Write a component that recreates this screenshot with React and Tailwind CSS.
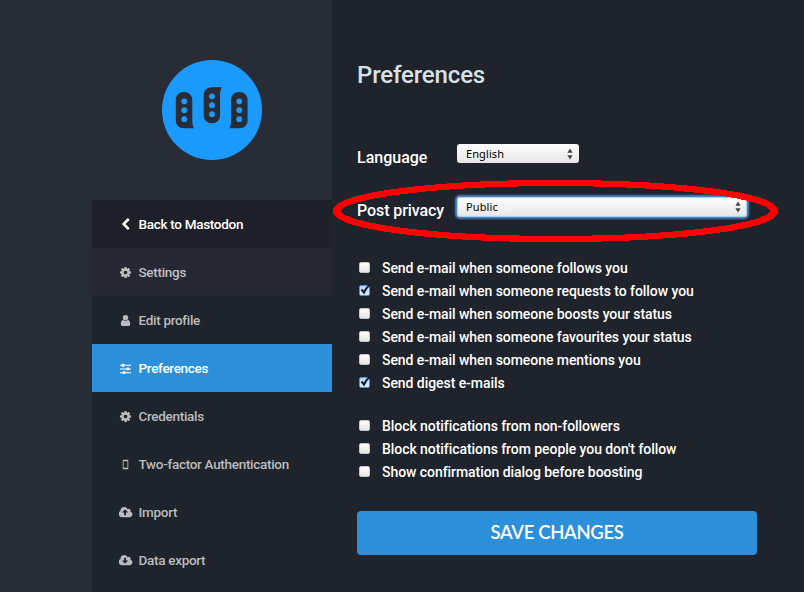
const PATHS = {
  back: "M1427 301l-531 531 531 531q19 19 19 45t-19 45l-166 166q-19 19-45 19t-45-19l-742-742q-19-19-19-45t19-45l742-742q19-19 45-19t45 19l166 166q19 19 19 45t-19 45z",
  cog: "M1152 896q0-106-75-181t-181-75-181 75-75 181 75 181 181 75 181-75 75-181zm512-109v222q0 12-8 23t-20 13l-185 28q-19 54-39 91 35 50 107 138 10 12 10 25t-9 23q-27 37-99 108t-94 71q-12 0-26-9l-138-108q-44 23-91 38-16 136-29 186-7 28-36 28h-222q-14 0-24.5-8.5t-11.5-21.5l-28-184q-49-16-90-37l-141 107q-10 9-25 9-14 0-25-11-126-114-165-168-7-10-7-23 0-12 8-23 15-21 51-66.5t54-70.5q-27-50-41-99l-183-27q-13-2-21-12.5t-8-23.5v-222q0-12 8-23t19-13l186-28q14-46 39-92-40-57-107-138-10-12-10-24 0-10 9-23 26-36 98.5-107.5t94.5-71.5q13 0 26 10l138 107q44-23 91-38 16-136 29-186 7-28 36-28h222q14 0 24.5 8.5t11.5 21.5l28 184q49 16 90 37l142-107q9-9 24-9 13 0 25 10 129 119 165 170 7 8 7 22 0 12-8 23-15 21-51 66.5t-54 70.5q26 50 41 98l183 28q13 2 21 12.5t8 23.5z",
  user: "M1536 1399q0 109-62.5 187t-150.5 78h-854q-88 0-150.5-78t-62.5-187q0-85 8.5-160.5t31.5-152 58.5-131 94-89 134.5-34.5q131 128 313 128t313-128q76 0 134.5 34.5t94 89 58.5 131 31.5 152 8.5 160.5zm-256-887q0 159-112.5 271.5t-271.5 112.5-271.5-112.5-112.5-271.5 112.5-271.5 271.5-112.5 271.5 112.5 112.5 271.5z",
  sliders: "M480 1408v128h-352v-128h352zm352-128q26 0 45 19t19 45v256q0 26-19 45t-45 19h-256q-26 0-45-19t-19-45v-256q0-26 19-45t45-19h256zm160-384v128h-864v-128h864zm-640-512v128h-224v-128h224zm1312 1024v128h-736v-128h736zm-960-1152q26 0 45 19t19 45v256q0 26-19 45t-45 19h-256q-26 0-45-19t-19-45v-256q0-26 19-45t45-19h256zm640 512q26 0 45 19t19 45v256q0 26-19 45t-45 19h-256q-26 0-45-19t-19-45v-256q0-26 19-45t45-19h256zm320 128v128h-224v-128h224zm0-512v128h-864v-128h864z",
  mobile: "M608 256h576q96 0 96 96v1088q0 96-96 96h-576q-96 0-96-96v-1088q0-96 96-96zM624 448v896h544v-896z",
};
const CLOUD =
  "m640 288q0 159-112.5 271.5t-271.5 112.5h-1088q-185 0-316.5-131.5t-131.5-316.5q0-130 70-240t188-165q-2-30-2-43 0-212 150-362t362-150q156 0 285.5 87t188.5 231q71-62 166-62 106 0 181 75t75 181q0 76-41 138 130 31 213.5 135.5t83.5 238.5z";
PATHS.upload =
  "M1216 864q0-14-9-23l-352-352q-9-9-23-9t-23 9l-351 351q-10 12-10 24 0 14 9 23t23 9h224v352q0 13 9.5 22.5t22.5 9.5h192q13 0 22.5-9.5t9.5-22.5v-352h224q13 0 22.5-9.5t9.5-22.5z" + CLOUD;
PATHS.download =
  "M1216 928q0-14-9-23t-23-9h-224v-352q0-13-9.5-22.5t-22.5-9.5h-192q-13 0-22.5 9.5t-9.5 22.5v352h-224q-13 0-22.5 9.5t-9.5 22.5q0 14 9 23l352 352q9 9 23 9t23-9l351-351q10-12 10-24zM1216 864" + CLOUD;

function Icon({ name }) {
  const cloud = name === "upload" || name === "download";
  return (
    <svg
      className={cloud ? "h-[13px] w-[14px] shrink-0" : "h-[13px] w-[13px] shrink-0"}
      viewBox={cloud ? "0 0 1920 1792" : "0 0 1792 1792"}
      fill="currentColor"
      fillRule="evenodd"
    >
      <path d={PATHS[name]} />
    </svg>
  );
}

const NAV = [
  { icon: "back", label: "Back to Mastodon", tone: "rounded-l bg-[#1d2028] text-white" },
  { icon: "cog", label: "Settings", tone: "bg-[#252732] text-[#bcbec1]" },
  { icon: "user", label: "Edit profile", tone: "bg-[#1f232b] text-[#b9bcbf]" },
  { icon: "sliders", label: "Preferences", tone: "bg-[#2b90d9] text-white" },
  { icon: "cog", label: "Credentials", tone: "bg-[#1f232b] text-[#b9bcbf]" },
  { icon: "mobile", label: "Two-factor Authentication", tone: "bg-[#1f232b] text-[#b9bcbf]" },
  { icon: "upload", label: "Import", tone: "bg-[#1f232b] text-[#b9bcbf]" },
  { icon: "download", label: "Data export", tone: "bg-[#1f232b] text-[#b9bcbf]" },
];

function Logo() {
  return (
    <svg className="h-[100px] w-[100px]" viewBox="0 0 100 100">
      <circle cx="50" cy="50" r="50" fill="#1a9bfc" />
      <g fill="#282c37">
        <path d="M22 32c5 0 8.3 3.400 8.300 8v20c0 4 .4 6.500 1.900 8.300H22c-5 0-8.200-3.300-8.200-8V40c0-4.600 3.200-8 8.200-8z" />
        <path d="M50 63.200c-5 0-8.300-3.400-8.300-8V35.500c0-5 3.300-8.300 8.300-8.300h10c-1.500 1.800-1.900 4.300-1.900 8.300v19.700c0 4.600-3.200 8-8.100 8z" />
        <path d="M77.400 32c-5 0-8.300 3.400-8.300 8v20c0 4-.4 6.500-1.900 8.300h10.200c5 0 8.200-3.300 8.200-8V40c0-4.600-3.200-8-8.200-8z" />
      </g>
      <g fill="#1a9bfc">
        {[[22.300, 41.300], [50, 36.300], [77.300, 41.300]].map(([x, y]) =>
          [0, 8.900, 17.900].map((d) => <circle key={`${x}-${d}`} cx={x} cy={y + d} r="2.900" />)
        )}
      </g>
    </svg>
  );
}

function Arrows() {
  return (
    <svg className="h-3 w-[6px]" viewBox="0 0 6 12" fill="#444">
      <path d="M3 0.500L5.600 4.700H0.400zM3 11.500L0.400 7.300h5.200z" />
    </svg>
  );
}

function Check({ checked, children }) {
  return (
    <label className="flex h-[23px] items-center">
      <span
        className={
          checked
            ? "mr-3 mb-[3px] ml-[2px] h-[11px] w-[11px] rounded-[2px] border border-[#5b8cc4] bg-linear-to-b from-[#b7d9f6] to-[#d3efff]"
            : "mr-3 mb-[3px] ml-[2px] h-[11px] w-[11px] rounded-[2px] border border-[#c4c6c9] bg-linear-to-b from-white to-[#e6e6e6]"
        }
      >
        {checked && (
          <svg className="-mt-[2px] h-[11px] w-[11px] overflow-visible" viewBox="0 0 11 11" fill="none" stroke="#071a38" strokeWidth="2">
            <path d="M1.500 5.500L4 8.500Q6 4 10 0.500" />
          </svg>
        )}
      </span>
      <span className="text-[14px] leading-[23px] tracking-[-0.06px] whitespace-nowrap">{children}</span>
    </label>
  );
}

export default function App() {
  return (
    <div className="relative flex h-[592px] w-[804px] overflow-hidden bg-[#1f232b] font-['Roboto',sans-serif] font-medium text-white">
      <aside className="flex w-[332px] shrink-0 flex-col bg-[#282c37] pl-[92px]">
        <div className="flex h-[200px] justify-center pt-[60px]">
          <Logo />
        </div>
        <nav className="flex flex-col">
          {NAV.map((n) => (
            <a key={n.label} className={`flex h-12 items-center pl-[26px] text-[13.5px] tracking-[-0.3px] ${n.tone}`}>
              <span className="mr-[5.5px] flex w-[15px] justify-center">
                <Icon name={n.icon} />
              </span>
              <span className="pt-px whitespace-nowrap">{n.label}</span>
            </a>
          ))}
        </nav>
        <div className="h-2 bg-[#1f232b]" />
      </aside>

      <main className="flex w-[425px] flex-col pl-[25px]">
        <h2 className="mt-[60px] text-[24px] leading-[30px] font-medium tracking-[-0.15px] text-[#d9e1e8]">Preferences</h2>
        <div className="mt-[53px] flex h-[26px] items-start">
          <span className="w-[100px] pt-[3px] text-[16px] leading-6">Language</span>
          <div className="mt-[1px] flex h-[19px] w-[122px] items-center justify-between rounded-[3px] bg-linear-to-b from-white to-[#e6e6e6] pr-[6px] pl-[9px] font-['Noto_Sans',sans-serif] text-[11px] font-normal text-black">
            <span className="pt-px tracking-[0.1px]">English</span>
            <Arrows />
          </div>
        </div>
        <div className="mt-[27px] flex h-[27px] items-start">
          <span className="w-[100px] pt-[3px] text-[16px] leading-6 tracking-[-0.08px]">Post privacy</span>
          <div className="mt-[1px] flex h-[20px] w-[290px] items-center justify-between rounded-[3px] bg-linear-to-b from-white to-[#e6e6e6] pr-[6px] pl-[9px] font-['Noto_Sans',sans-serif] text-[11px] font-normal text-black shadow-[inset_0_0_1px_1px_#a9cdf0,0_0_2px_2px_#4a86c2]">
            <span className="pt-px tracking-[0.1px]">Public</span>
            <Arrows />
          </div>
        </div>
        <div className="mt-[34px] flex flex-col">
          <Check>Send e-mail when someone follows you</Check>
          <Check checked>Send e-mail when someone requests to follow you</Check>
          <Check>Send e-mail when someone boosts your status</Check>
          <Check>Send e-mail when someone favourites your status</Check>
          <Check>Send e-mail when someone mentions you</Check>
          <Check checked>Send digest e-mails</Check>
        </div>
        <div className="mt-5 flex flex-col">
          <Check>Block notifications from non-followers</Check>
          <Check>Block notifications from people you don't follow</Check>
          <Check>Show confirmation dialog before boosting</Check>
        </div>
        <button className="mt-[27px] h-11 w-[400px] shrink-0 rounded bg-[#2b90d9] font-['Lato',sans-serif] text-[18.5px] font-semibold tracking-[-0.33px] text-white">
          SAVE CHANGES
        </button>
      </main>

      {/* hand-drawn highlight ring over the privacy row */}
      <svg className="absolute top-[178px] left-[331px] h-[66px] w-[450px]" viewBox="0 0 450 66" shapeRendering="crispEdges">
        <g transform="translate(224.500 33) scale(1.3333 1)">
          <ellipse rx="163.900" ry="28" fill="none" stroke="#ff0000" strokeWidth="6.200" />
        </g>
      </svg>
    </div>
  );
}
